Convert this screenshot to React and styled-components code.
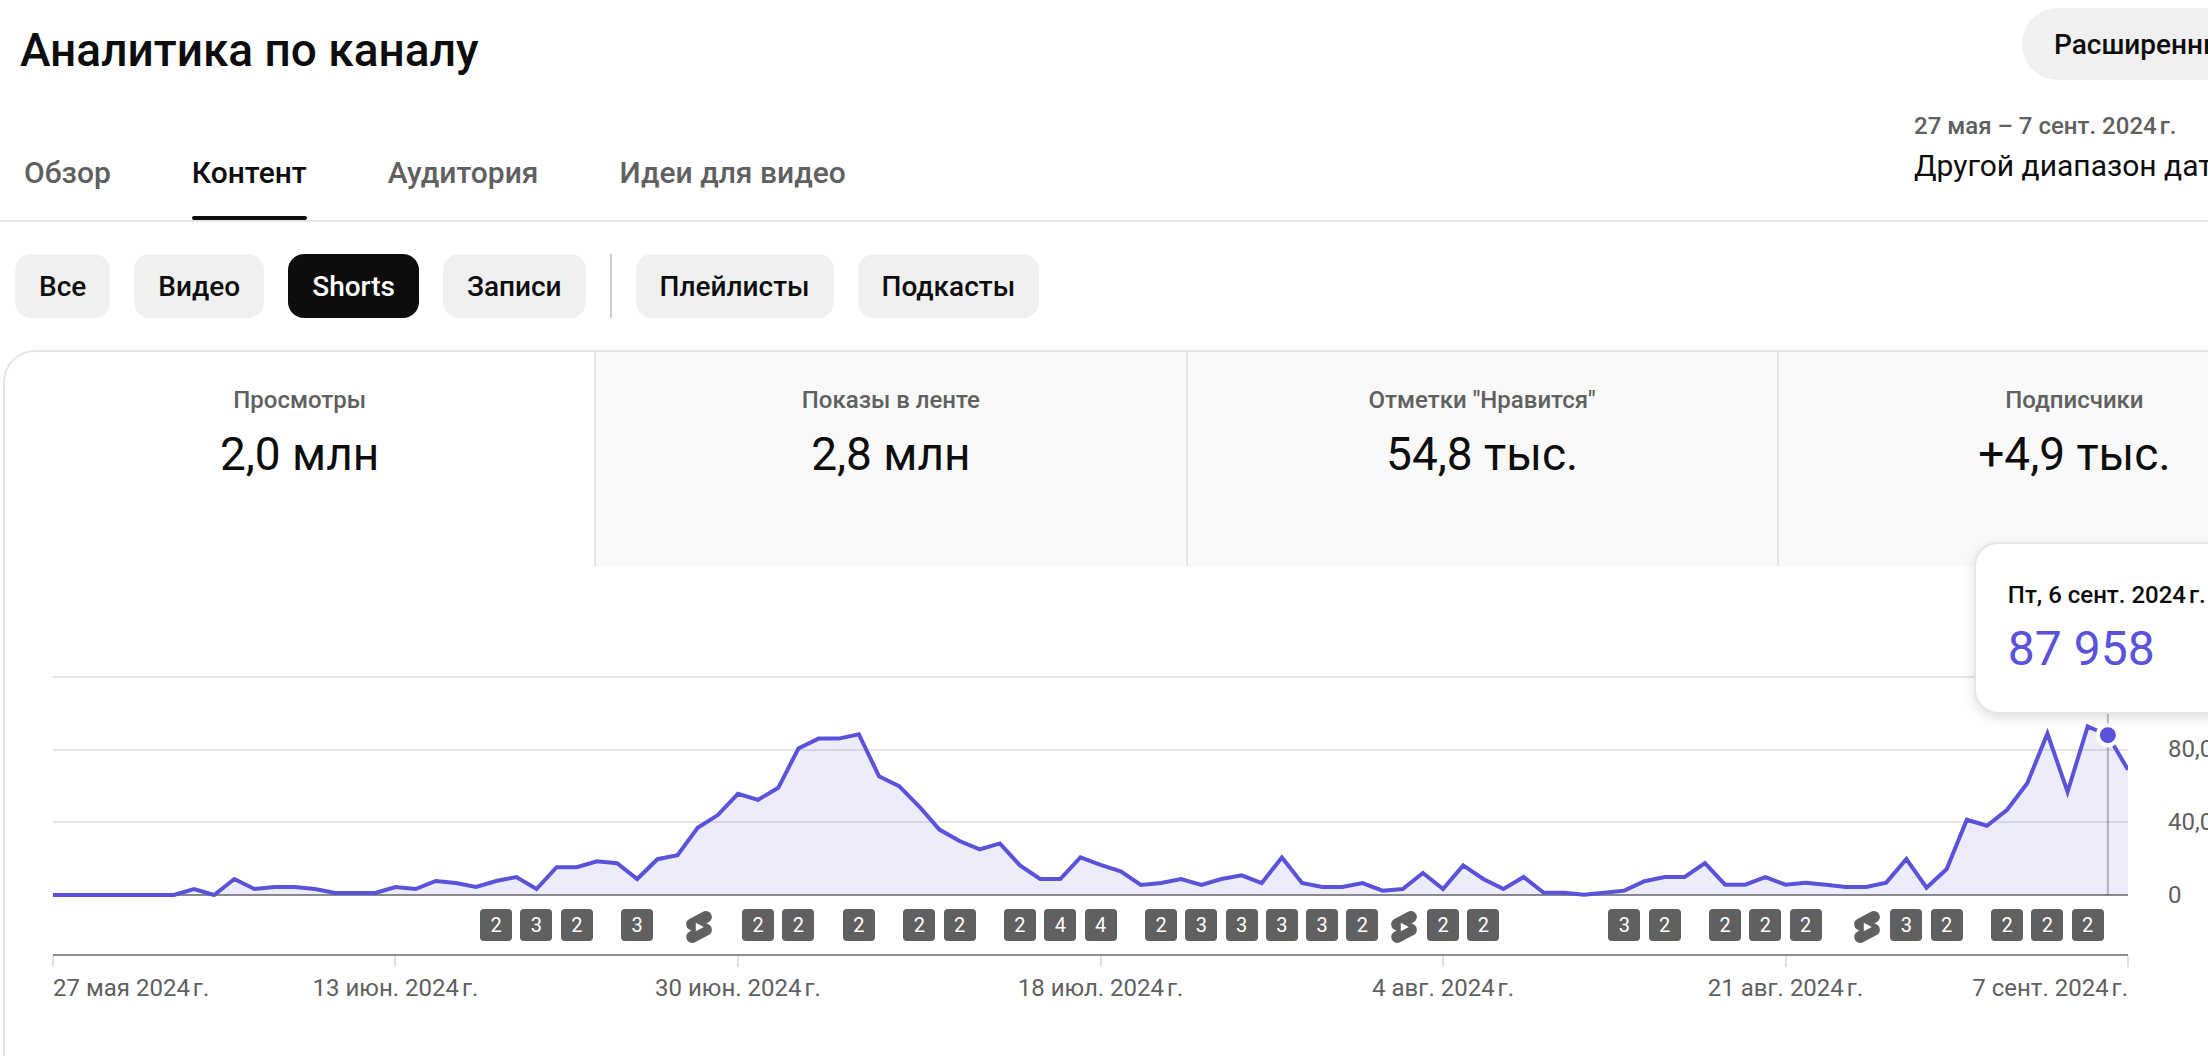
import React, { useState } from "react";
import styled, { createGlobalStyle, css } from "styled-components";

const GlobalStyle = createGlobalStyle`
  *, *::before, *::after { box-sizing: border-box; }
  body { margin: 0; background: #fff; }
  button { margin: 0; border: 0; padding: 0; background: none; font: inherit; color: inherit; cursor: pointer; }
`;

const Page = styled.div`
  min-height: 100vh;
  display: flex;
  overflow: hidden;
  font-family: Roboto, "Liberation Sans", sans-serif;
  color: #0d0d0d;
`;

/* The sheet is wider than the window; its right edge runs off screen. */
const Sheet = styled.main`
  flex: 1 0 auto;
  width: calc(100% + 164px);
  display: flex;
  flex-direction: column;
`;

const Header = styled.header`
  border-bottom: 2px solid #e5e5e5;
`;

const HeaderRow = styled.div`
  display: flex;
  justify-content: space-between;
`;

const TitleRow = styled(HeaderRow)`
  padding: 8px 0 28px 20px;
  align-items: flex-start;
`;

const Title = styled.h1`
  margin: 10px 0 0;
  font-size: 46px;
  line-height: 64px;
  font-weight: 500;
`;

const Actions = styled.div`
  width: 350px;
`;

const AdvancedButton = styled.button`
  height: 72px;
  padding: 0 32px;
  border-radius: 36px;
  background: #f0f0f0;
  font-size: 28px;
  font-weight: 500;
  white-space: nowrap;
`;

const TabsRow = styled(HeaderRow)`
  padding-left: 24px;
  align-items: flex-end;
`;

const Tabs = styled.div`
  display: flex;
  gap: 81px;
`;

const Tab = styled.button`
  height: 90px;
  border-bottom: 4px solid transparent;
  position: relative;
  font-size: 30px;
  line-height: 40px;
  font-weight: 500;
  color: ${(p) => (p.$active ? "#0d0d0d" : "#606060")};
  ${(p) =>
    p.$active &&
    css`
      &::after {
        content: "";
        position: absolute;
        left: 0;
        right: 0;
        bottom: -4px;
        height: 4px;
        border-radius: 2px;
        background: #0d0d0d;
      }
    `}
`;

const DatePicker = styled.button`
  width: 458px;
  height: 110px;
  display: flex;
  flex-direction: column;
  align-items: flex-start;
  text-align: left;
`;

const DateRange = styled.span`
  font-size: 24px;
  line-height: 32px;
  font-weight: 500;
  color: #606060;
`;

const DateMode = styled.span`
  margin-top: 4px;
  font-size: 30px;
  line-height: 40px;
`;

const Chips = styled.div`
  display: flex;
  gap: 24px;
  padding: 32px 15px;
`;

const Chip = styled.button`
  height: 64px;
  padding: 0 24px;
  border-radius: 16px;
  font-size: 28px;
  font-weight: 500;
  background: ${(p) => (p.$active ? "#0d0d0d" : "#f0f0f0")};
  color: ${(p) => (p.$active ? "#fff" : "#0d0d0d")};
`;

const ChipDivider = styled.span`
  width: 2px;
  background: #ccc;
`;

const Card = styled.section`
  flex: 1;
  margin-left: 3px;
  border: 2px solid #e5e5e5;
  border-bottom: 0;
  border-radius: 32px 32px 0 0;
`;

const Metrics = styled.div`
  display: grid;
  grid-template-columns: repeat(4, 1fr);
`;

const Metric = styled.button`
  height: 214px;
  padding-top: 32px;
  display: flex;
  flex-direction: column;
  align-items: center;
  gap: 10px;
  border-right: 2px solid #e5e5e5;
  background: ${(p) => (p.$active ? "transparent" : "#f9f9f9")};
  &:last-child {
    border-right: 0;
    border-top-right-radius: 30px;
  }
`;

const MetricLabel = styled.span`
  font-size: 24px;
  line-height: 32px;
  font-weight: 500;
  color: #606060;
`;

const MetricValue = styled.span`
  font-size: 46px;
  line-height: 56px;
`;

const ChartArea = styled.div`
  display: grid;
  grid-template-columns: 1fr 202px;
  column-gap: 40px;
  padding: 110px 0 48px 48px;
`;

const Plot = styled.div`
  position: relative;
  height: 222px;
`;

const PlotSvg = styled.svg`
  display: block;
  width: 100%;
  height: 222px;
`;

const YAxis = styled.div`
  height: 222px;
  display: flex;
  flex-direction: column;
  justify-content: flex-end;
  font-size: 24px;
  color: #606060;
`;

const YLabel = styled.span`
  height: 73px;
  line-height: 32px;
  &:last-child {
    height: 19px;
  }
`;

const Tooltip = styled.div`
  position: absolute;
  z-index: 1;
  left: ${(p) => p.$at}%;
  bottom: 184px;
  min-width: 268px;
  transform: translateX(-50%);
  display: flex;
  flex-direction: column;
  gap: 10px;
  padding: 35px 32px;
  border: 2px solid #e5e5e5;
  border-radius: 24px;
  background: #fff;
  box-shadow: 0 4px 12px rgba(0, 0, 0, 0.12);
  white-space: nowrap;
`;

const TooltipDate = styled.span`
  font-size: 24px;
  line-height: 32px;
  font-weight: 500;
`;

const TooltipValue = styled.span`
  font-size: 48px;
  line-height: 56px;
  color: #5a52d9;
`;

const Uploads = styled.div`
  position: relative;
  height: 56px;
`;

const Upload = styled.span`
  position: absolute;
  top: 11px;
  left: ${(p) => p.$at}%;
  width: 32px;
  height: 32px;
  margin-left: -16px;
  border-radius: 4px;
  background: #606060;
  color: #fff;
  font-size: 20px;
  line-height: 32px;
  text-align: center;
`;

const ShortsIcon = styled.svg`
  position: absolute;
  top: 13px;
  left: ${(p) => p.$at}%;
  width: 32px;
  height: 32px;
  margin-left: -15px;
  fill: #606060;
`;

const XAxis = styled.div`
  position: relative;
  height: 50px;
  border-top: 2px solid #909090;
`;

const Tick = styled.span`
  position: absolute;
  top: 0;
  left: ${(p) => p.$at}%;
  width: 2px;
  height: 11px;
  margin-left: -1px;
  background: #e0e0e0;
`;

const XLabel = styled.span`
  position: absolute;
  top: 16px;
  left: ${(p) => p.$at}%;
  transform: translateX(${(p) => (p.$at === 0 ? "0" : p.$at === 100 ? "-100%" : "-50%")});
  font-size: 24px;
  line-height: 32px;
  color: #606060;
  white-space: nowrap;
`;

const LAST_DAY = 103;
const HOVER_DAY = 102;
const MAX = 120000;
const PLOT_HEIGHT = 218;
const BASELINE = 219;

/* Daily views, 27 May to 7 September. */
const views = [
  0, 0, 0, 0, 0, 0, 0, 3300, 0, 8800, 3300, 4400, 4400, 3300, 1100, 1100, 1100, 4400, 3300, 7700,
  6600, 4400, 7700, 9900, 3300, 15300, 15300, 18600, 17500, 8800, 19700, 21900, 37000, 44000,
  55700, 52400, 59000, 80600, 86100, 86100, 88500, 65400, 59900, 48700, 36000, 29700, 25100,
  28400, 16300, 8800, 8800, 20700, 16600, 13000, 5500, 6600, 8800, 5500, 8800, 10800, 6600,
  20700, 6600, 4400, 4400, 6600, 2400, 3300, 12100, 3300, 16300, 8800, 3300, 9900, 1200, 1200,
  100, 1200, 2400, 7600, 9900, 9900, 17600, 5700, 5700, 9900, 5700, 6800, 5700, 4400, 4400, 6800,
  19800, 4000, 14300, 41400, 38100, 46900, 61500, 88900, 56800, 92800, 87958, 68900,
];

const uploads = [
  [22, 2], [24, 3], [26, 2], [29, 3], [32, 1], [35, 2], [37, 2], [40, 2], [43, 2], [45, 2],
  [48, 2], [50, 4], [52, 4], [55, 2], [57, 3], [59, 3], [61, 3], [63, 3], [65, 2], [67, 1],
  [69, 2], [71, 2], [78, 3], [80, 2], [83, 2], [85, 2], [87, 2], [90, 1], [92, 3], [94, 2],
  [97, 2], [99, 2], [101, 2],
];

const dates = [
  [0, "27 мая 2024\u202fг."],
  [17, "13 июн. 2024\u202fг."],
  [34, "30 июн. 2024\u202fг."],
  [52, "18 июл. 2024\u202fг."],
  [69, "4 авг. 2024\u202fг."],
  [86, "21 авг. 2024\u202fг."],
  [103, "7 сент. 2024\u202fг."],
];

const metrics = [
  ["Просмотры", "2,0 млн"],
  ["Показы в ленте", "2,8 млн"],
  ['Отметки "Нравится"', "54,8 тыс."],
  ["Подписчики", "+4,9 тыс."],
];

const tabs = ["Обзор", "Контент", "Аудитория", "Идеи для видео"];
const contentTypes = ["Все", "Видео", "Shorts", "Записи"];
const collections = ["Плейлисты", "Подкасты"];

const percent = (day) => (day / LAST_DAY) * 100;
const yOf = (value) => BASELINE - (value / MAX) * PLOT_HEIGHT;

function ViewsPlot() {
  const points = views.map((v, day) => `${day},${yOf(v)}`).join(" ");
  const hoverX = `${percent(HOVER_DAY)}%`;
  return (
    <PlotSvg role="img" aria-label="Просмотры">
      {[120000, 80000, 40000].map((v) => (
        <line key={v} x1="0" x2="100%" y1={Math.round(yOf(v))} y2={Math.round(yOf(v))} stroke="#e5e5e5" strokeWidth="2" />
      ))}
      <line x1="0" x2="100%" y1={BASELINE} y2={BASELINE} stroke="#8c8c8c" strokeWidth="2" />
      <svg width="100%" height="222" viewBox={`0 0 ${LAST_DAY} 222`} preserveAspectRatio="none">
        <polygon points={`0,${BASELINE} ${points} ${LAST_DAY},${BASELINE}`} fill="#5a52d9" fillOpacity="0.11" />
        <polyline points={points} fill="none" stroke="#5a52d9" strokeWidth="4" vectorEffect="non-scaling-stroke" />
      </svg>
      <line x1={hoverX} x2={hoverX} y1="30" y2={BASELINE} stroke="#000" strokeOpacity="0.25" strokeWidth="2" />
      <circle cx={hoverX} cy={yOf(views[HOVER_DAY])} r="10" fill="#5a52d9" stroke="#fff" strokeWidth="4" />
    </PlotSvg>
  );
}

export default function App() {
  const [tab, setTab] = useState("Контент");
  const [type, setType] = useState("Shorts");
  const [metric, setMetric] = useState("Просмотры");

  const chip = (name) => (
    <Chip key={name} type="button" aria-pressed={type === name} $active={type === name} onClick={() => setType(name)}>
      {name}
    </Chip>
  );

  return (
    <Page>
      <GlobalStyle />
      <Sheet>
        <Header>
          <TitleRow>
            <Title>Аналитика по каналу</Title>
            <Actions>
              <AdvancedButton type="button">Расширенный режим</AdvancedButton>
            </Actions>
          </TitleRow>
          <TabsRow>
            <Tabs role="tablist">
              {tabs.map((name) => (
                <Tab key={name} type="button" role="tab" aria-selected={tab === name} $active={tab === name} onClick={() => setTab(name)}>
                  {name}
                </Tab>
              ))}
            </Tabs>
            <DatePicker type="button">
              <DateRange>27 мая – 7 сент. 2024{"\u202f"}г.</DateRange>
              <DateMode>Другой диапазон дат</DateMode>
            </DatePicker>
          </TabsRow>
        </Header>

        <Chips>
          {contentTypes.map(chip)}
          <ChipDivider />
          {collections.map(chip)}
        </Chips>

        <Card>
          <Metrics role="tablist">
            {metrics.map(([name, value]) => (
              <Metric key={name} type="button" role="tab" aria-selected={metric === name} $active={metric === name} onClick={() => setMetric(name)}>
                <MetricLabel>{name}</MetricLabel>
                <MetricValue>{value}</MetricValue>
              </Metric>
            ))}
          </Metrics>

          <ChartArea>
            <Plot>
              <ViewsPlot />
              <Tooltip role="tooltip" $at={percent(HOVER_DAY)}>
                <TooltipDate>Пт, 6 сент. 2024{"\u202f"}г.</TooltipDate>
                <TooltipValue>87 958</TooltipValue>
              </Tooltip>
            </Plot>
            <YAxis>
              <YLabel>80,0 тыс.</YLabel>
              <YLabel>40,0 тыс.</YLabel>
              <YLabel>0</YLabel>
            </YAxis>
            <div>
              <Uploads>
                {uploads.map(([day, count]) =>
                  count === 1 ? (
                    <ShortsIcon key={day} $at={percent(day)} viewBox="0 0 24 24" aria-hidden="true">
                      <path d="m18.931 9.99-1.441-.601 1.717-.913a4.48 4.48 0 0 0 1.874-6.078 4.506 4.506 0 0 0-6.09-1.874L4.792 5.929a4.504 4.504 0 0 0-2.402 4.193 4.521 4.521 0 0 0 2.666 3.904c.036.012 1.442.6 1.442.6l-1.706.901a4.51 4.51 0 0 0-2.369 3.967A4.528 4.528 0 0 0 6.93 24c.725 0 1.437-.174 2.08-.508l10.21-5.406a4.494 4.494 0 0 0 2.39-4.192 4.525 4.525 0 0 0-2.678-3.904ZM9.597 15.19V8.824l6.007 3.184z" />
                    </ShortsIcon>
                  ) : (
                    <Upload key={day} $at={percent(day)}>{count}</Upload>
                  )
                )}
              </Uploads>
              <XAxis>
                {dates.map(([day, label]) => (
                  <React.Fragment key={day}>
                    <Tick $at={percent(day)} />
                    <XLabel $at={percent(day)}>{label}</XLabel>
                  </React.Fragment>
                ))}
              </XAxis>
            </div>
          </ChartArea>
        </Card>
      </Sheet>
    </Page>
  );
}
